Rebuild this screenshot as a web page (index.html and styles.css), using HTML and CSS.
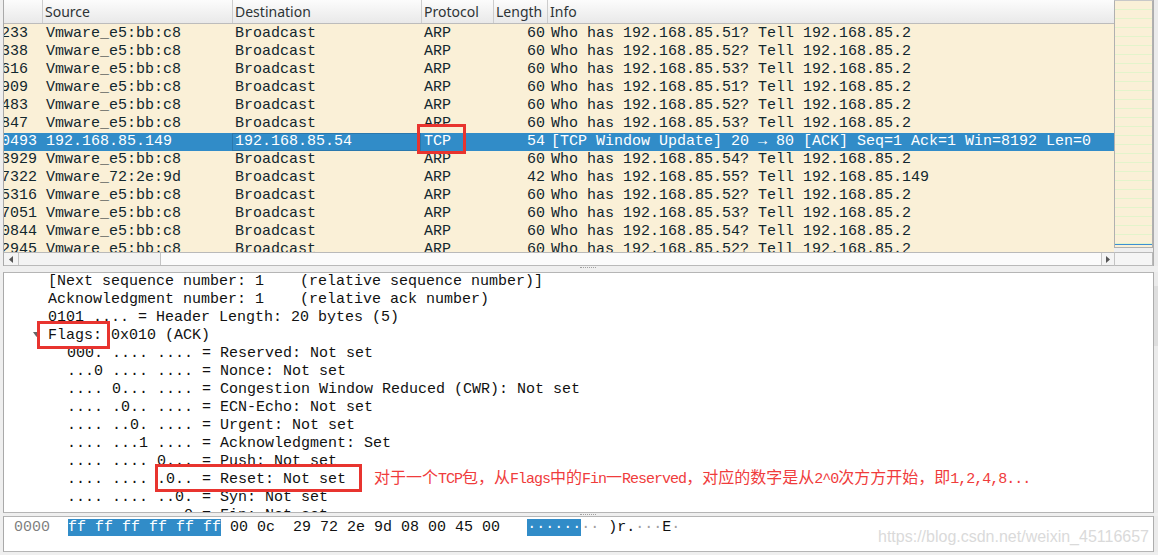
FILE: index.html
```html
<!DOCTYPE html>
<html>
<head>
<meta charset="utf-8">
<title>Wireshark</title>
<link rel="stylesheet" href="styles.css">
</head>
<body>
<div class="app">
  <div class="top">
    <div class="plist">
      <div class="hdr">
        <div class="hc"></div>
        <div class="hc">Source</div>
        <div class="hc">Destination</div>
        <div class="hc">Protocol</div>
        <div class="hc">Length</div>
        <div class="hc">Info</div>
      </div>
      <div class="rows">
        <div class="row"><span class="c0"><span class="t">233</span></span><span class="c1">Vmware_e5:bb:c8</span><span class="c2">Broadcast</span><span class="c3">ARP</span><span class="c4">60</span><span class="c5">Who has 192.168.85.51? Tell 192.168.85.2</span></div>
        <div class="row"><span class="c0"><span class="t">338</span></span><span class="c1">Vmware_e5:bb:c8</span><span class="c2">Broadcast</span><span class="c3">ARP</span><span class="c4">60</span><span class="c5">Who has 192.168.85.52? Tell 192.168.85.2</span></div>
        <div class="row"><span class="c0"><span class="t">616</span></span><span class="c1">Vmware_e5:bb:c8</span><span class="c2">Broadcast</span><span class="c3">ARP</span><span class="c4">60</span><span class="c5">Who has 192.168.85.53? Tell 192.168.85.2</span></div>
        <div class="row"><span class="c0"><span class="t">909</span></span><span class="c1">Vmware_e5:bb:c8</span><span class="c2">Broadcast</span><span class="c3">ARP</span><span class="c4">60</span><span class="c5">Who has 192.168.85.51? Tell 192.168.85.2</span></div>
        <div class="row"><span class="c0"><span class="t">483</span></span><span class="c1">Vmware_e5:bb:c8</span><span class="c2">Broadcast</span><span class="c3">ARP</span><span class="c4">60</span><span class="c5">Who has 192.168.85.52? Tell 192.168.85.2</span></div>
        <div class="row"><span class="c0"><span class="t">847</span></span><span class="c1">Vmware_e5:bb:c8</span><span class="c2">Broadcast</span><span class="c3">ARP</span><span class="c4">60</span><span class="c5">Who has 192.168.85.53? Tell 192.168.85.2</span></div>
        <div class="row sel"><span class="c0"><span class="t">0493</span></span><span class="c1">192.168.85.149</span><span class="c2 focus">192.168.85.54</span><span class="c3">TCP</span><span class="c4">54</span><span class="c5">[TCP Window Update] 20 → 80 [ACK] Seq=1 Ack=1 Win=8192 Len=0</span></div>
        <div class="row"><span class="c0"><span class="t">3929</span></span><span class="c1">Vmware_e5:bb:c8</span><span class="c2">Broadcast</span><span class="c3">ARP</span><span class="c4">60</span><span class="c5">Who has 192.168.85.54? Tell 192.168.85.2</span></div>
        <div class="row"><span class="c0"><span class="t">7322</span></span><span class="c1">Vmware_72:2e:9d</span><span class="c2">Broadcast</span><span class="c3">ARP</span><span class="c4">42</span><span class="c5">Who has 192.168.85.55? Tell 192.168.85.149</span></div>
        <div class="row"><span class="c0"><span class="t">5316</span></span><span class="c1">Vmware_e5:bb:c8</span><span class="c2">Broadcast</span><span class="c3">ARP</span><span class="c4">60</span><span class="c5">Who has 192.168.85.52? Tell 192.168.85.2</span></div>
        <div class="row"><span class="c0"><span class="t">7051</span></span><span class="c1">Vmware_e5:bb:c8</span><span class="c2">Broadcast</span><span class="c3">ARP</span><span class="c4">60</span><span class="c5">Who has 192.168.85.53? Tell 192.168.85.2</span></div>
        <div class="row"><span class="c0"><span class="t">0844</span></span><span class="c1">Vmware_e5:bb:c8</span><span class="c2">Broadcast</span><span class="c3">ARP</span><span class="c4">60</span><span class="c5">Who has 192.168.85.54? Tell 192.168.85.2</span></div>
        <div class="row"><span class="c0"><span class="t">2945</span></span><span class="c1">Vmware_e5:bb:c8</span><span class="c2">Broadcast</span><span class="c3">ARP</span><span class="c4">60</span><span class="c5">Who has 192.168.85.52? Tell 192.168.85.2</span></div>
      </div>
      <div class="hscroll">
        <div class="sbtn"><svg width="4" height="7" viewBox="0 0 4 7"><path d="M4 0 L0 3.5 L4 7 Z" fill="#555"/></svg></div>
        <div class="thumb"></div>
        <div class="track"></div>
        <div class="sbtn right"><svg width="4" height="7" viewBox="0 0 4 7"><path d="M0 0 L4 3.5 L0 7 Z" fill="#555"/></svg></div>
      </div>
    </div>
    <div class="side">
      <div class="minimap"><div class="mm-cur"></div></div>
      <div class="side-gap"></div>
      <div class="side-sb"></div>
    </div>
    <div class="vsb"></div>
  </div>

  <div class="split"><span class="grip"></span></div>

  <div class="mid">
    <div class="detail">
      <div class="l1">[Next sequence number: 1    (relative sequence number)]</div>
      <div class="l1">Acknowledgment number: 1    (relative ack number)</div>
      <div class="l1">0101 .... = Header Length: 20 bytes (5)</div>
      <div class="tw"><svg class="exp" width="7" height="5" viewBox="0 0 7 5"><path d="M0 0 L7 0 L3.5 5 Z" fill="#666"/></svg>Flags: 0x010 (ACK)</div>
      <div class="l2">000. .... .... = Reserved: Not set</div>
      <div class="l2">...0 .... .... = Nonce: Not set</div>
      <div class="l2">.... 0... .... = Congestion Window Reduced (CWR): Not set</div>
      <div class="l2">.... .0.. .... = ECN-Echo: Not set</div>
      <div class="l2">.... ..0. .... = Urgent: Not set</div>
      <div class="l2">.... ...1 .... = Acknowledgment: Set</div>
      <div class="l2">.... .... 0... = Push: Not set</div>
      <div class="l2">.... .... .0.. = Reset: Not set</div>
      <div class="l2">.... .... ..0. = Syn: Not set</div>
      <div class="l2">.... .... ...0 = Fin: Not set</div>
    </div>
    <div class="vsb2"></div>
  </div>

  <div class="split2"><span class="grip"></span></div>

  <div class="hexrow">
    <div class="hex"><div class="hl"><span class="off">0000</span>  <span class="hsel">ff ff ff ff ff ff</span> 00 0c  29 72 2e 9d 08 00 45 00   <span class="hsel">······</span><span class="dim">··</span> )r.<span class="dim">···</span>E<span class="dim">·</span></div></div>
    <div class="vsb3"></div>
  </div>
  <div class="bottom"></div>

  <div class="mark mark-tcp"></div>
  <div class="mark mark-flags"></div>
  <div class="mark mark-reset"></div>
  <div class="note">对于一个<span class="lat">TCP</span>包，从<span class="lat">Flags</span>中的<span class="lat">Fin</span>一<span class="lat">Reserved</span>，对应的数字是从<span class="lat">2^0</span>次方方开始，即<span class="lat">1,2,4,8...</span></div>
  <div class="watermark">https://blog.csdn.net/weixin_45116657</div>
</div>
</body>
</html>
```
FILE: styles.css
```css
* { box-sizing: border-box; }
html, body { margin: 0; padding: 0; }
body {
  width: 1158px;
  height: 555px;
  overflow: hidden;
  background: #efefef;
  font-family: "Liberation Mono", monospace;
}
.app {
  position: relative;
  width: 1158px;
  height: 555px;
  display: flex;
  flex-direction: column;
}

/* ---------- top: packet list ---------- */
.top {
  height: 266px;
  display: flex;
  padding-left: 3px;
}
.plist {
  width: 1111px;
  display: flex;
  flex-direction: column;
  border-left: 1px solid #a9a9a9;
}
.hdr, .row {
  display: grid;
  grid-template-columns: 38px 190px 189px 72px 54px 1fr;
}
.hdr {
  height: 24px;
  background: linear-gradient(#fcfcfc, #e9e9e9);
  border-bottom: 1px solid #bcbcbc;
}
.hc {
  font-family: "Noto Sans", sans-serif;
  font-size: 14px;
  line-height: 23px;
  color: #2e3436;
  padding-left: 2px;
  border-left: 1px solid #cdcdcd;
  overflow: hidden;
  white-space: nowrap;
}
.hc:first-child { border-left: none; }

.rows {
  height: 228px;
  padding-top: 1px;
  overflow: hidden;
  background: #faf0d7;
}
.row {
  height: 18px;
  line-height: 18px;
  font-size: 15px;
  color: #12272e;
  white-space: pre;
}
.row > span { overflow: hidden; }
.c0 .t { display: inline-block; margin-left: -3px; }
.c1 { padding-left: 4px; }
.c2 { padding-left: 3px; }
.c3 { padding-left: 3px; }
.c4 { padding-right: 2px; text-align: right; }
.c5 { padding-left: 4px; }
.row.sel { background: #318cc8; color: #fff; }
.row.sel .focus { box-shadow: inset 0 0 0 1px #2a78ad; }

.hscroll {
  height: 14px;
  display: flex;
  border-top: 1px solid #b9b9b9;
  border-bottom: 1px solid #b9b9b9;
  background: #f8f8f8;
}
.sbtn {
  width: 14px;
  display: flex;
  align-items: center;
  justify-content: center;
  background: #f4f4f4;
}
.sbtn.right { border-left: 1px solid #c4c4c4; width: 13px; }
.thumb {
  width: 143px;
  background: #f3f3f3;
  border-left: 1px solid #c4c4c4;
  border-right: 1px solid #c4c4c4;
}
.track { flex: 1; background: #fbfbfb; }

.side {
  width: 39px;
  display: flex;
  flex-direction: column;
}
.minimap {
  height: 248px;
  border: 1px solid #b0b0b0;
  border-top-color: #c8c8c8;
  background: repeating-linear-gradient(to bottom, #faf0d7 0, #faf0d7 8px, #e3f4cb 8px, #e3f4cb 9px);
  display: flex;
  flex-direction: column;
  justify-content: flex-end;
  padding-bottom: 2px;
}
.mm-cur { height: 1px; background: #3c8fd3; }
.side-gap { height: 4px; }
.side-sb {
  height: 14px;
  border: 1px solid #b9b9b9;
  border-left-color: #c4c4c4;
  background: #f5f5f5;
}
.vsb {
  width: 5px;
  background: #ebebeb;
  border-left: 1px solid #adadad;
}

/* ---------- splitters ---------- */
.split {
  height: 6px;
  padding-left: 580px;
  display: flex;
  align-items: flex-start;
}
.split2 {
  height: 3px;
  padding-left: 580px;
  display: flex;
  align-items: flex-start;
}
.grip {
  width: 16px;
  height: 1px;
  margin-top: 1px;
  border-top: 1px dotted #a0a0a0;
}

/* ---------- packet details ---------- */
.mid {
  height: 241px;
  display: flex;
  padding-left: 3px;
}
.detail {
  flex: 1;
  background: #fff;
  border-left: 1px solid #a9a9a9;
  border-top: 1px solid #b5b5b5;
  border-bottom: 1px solid #b5b5b5;
  overflow: hidden;
  font-size: 15px;
  line-height: 18px;
  color: #111;
}
.l1, .l2, .tw { height: 18px; white-space: pre; }
.l1 { padding-left: 44px; }
.l2 { padding-left: 63px; }
.tw { padding-left: 29px; }
.exp { margin-right: 8px; vertical-align: 2px; }
.vsb2 {
  width: 5px;
  background: linear-gradient(#ebebeb 0, #ebebeb 14px, #dedede 14px, #dedede 74px, #ebebeb 74px);
  border-left: 1px solid #adadad;
}

/* ---------- hex ---------- */
.hexrow {
  height: 36px;
  display: flex;
  padding-left: 3px;
}
.hex {
  flex: 1;
  background: #fff;
  border-left: 1px solid #a9a9a9;
  border-top: 1px solid #b5b5b5;
  border-bottom: 1px solid #b5b5b5;
  overflow: hidden;
}
.hl {
  padding-top: 2px;
  padding-left: 10px;
  font-size: 15px;
  line-height: 18px;
  color: #111;
  white-space: pre;
}
.off { color: #7f7f7f; }
.hsel { background: #318cc8; color: #fff; }
.dim { color: #a0a0a0; }
.vsb3 {
  width: 5px;
  background: #ebebeb;
  border-left: 1px solid #adadad;
}
.bottom { height: 3px; }

/* ---------- annotations (overlay) ---------- */
.mark {
  position: absolute;
  border: 3px solid #e8342f;
}
.mark-tcp { left: 417px; top: 124px; width: 49px; height: 30px; }
.mark-flags { left: 37px; top: 321px; width: 73px; height: 28px; }
.mark-reset { left: 155px; top: 464px; width: 207px; height: 28px; }
.note {
  position: absolute;
  left: 374px;
  top: 466px;
  font-family: "Noto Sans CJK SC", sans-serif;
  font-size: 16px;
  line-height: 20px;
  color: #f03c3c;
  white-space: nowrap;
}
.note .lat {
  font-family: "Liberation Mono", monospace;
  font-size: 15px;
  letter-spacing: -1px;
}
.watermark {
  position: absolute;
  left: 878px;
  top: 527px;
  font-family: "Liberation Sans", sans-serif;
  font-size: 16px;
  line-height: 20px;
  color: #dadada;
  white-space: nowrap;
}
```
